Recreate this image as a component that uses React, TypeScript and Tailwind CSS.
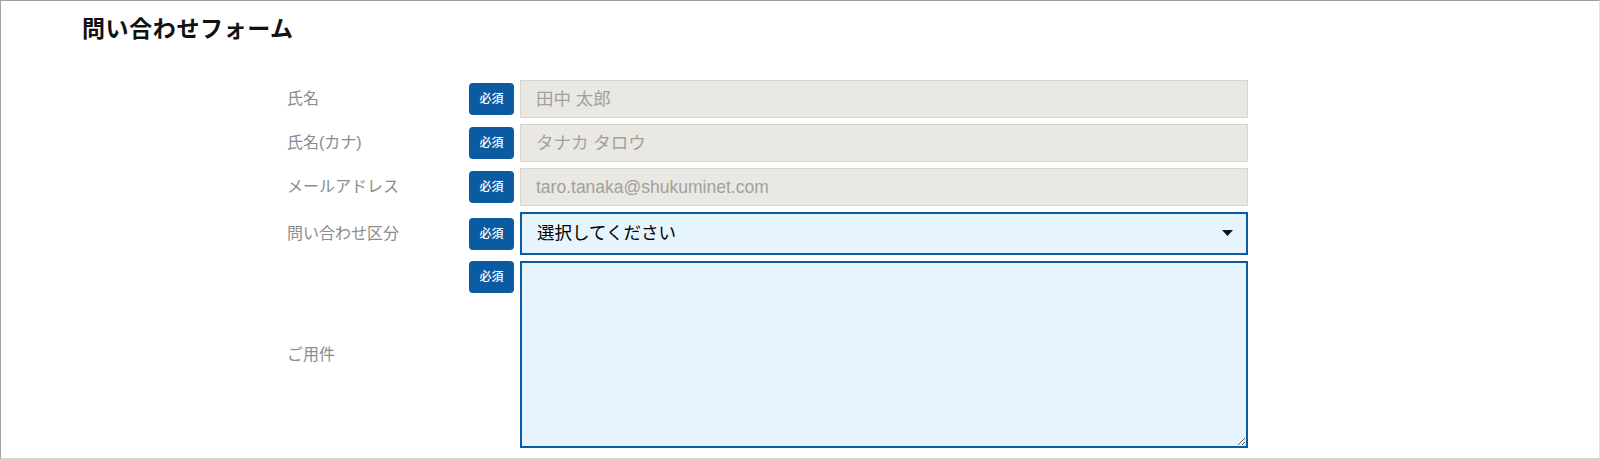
import React from "react";

const font = {
  fontFamily: '"Liberation Sans", "Noto Sans CJK JP", sans-serif',
};

const Badge: React.FC<{ className?: string }> = ({ className = "" }) => (
  <span
    className={`flex h-[32px] w-[45px] items-center justify-center rounded-[4px] bg-[#0b5ba3] text-[12px] font-medium text-white ${className}`}
  >
    必須
  </span>
);

const fields = [
  { label: "氏名", placeholder: "田中 太郎" },
  { label: "氏名(カナ)", placeholder: "タナカ タロウ" },
  { label: "メールアドレス", placeholder: "taro.tanaka@shukuminet.com" },
];

export default function App() {
  return (
    <div
      style={font}
      className="h-[459px] w-full overflow-hidden border-t border-l border-t-[#9e9e9e] border-l-[#a3a3a3] border-r border-b border-r-[#e2e2e2] border-b-[#d4d4d4] bg-white"
    >
      <h1 className="pl-[81px] pt-[13px] text-[23px] font-bold leading-[30px] tracking-[0.6px] text-[#111]">
        問い合わせフォーム
      </h1>

      <form className="mt-[36px] flex flex-col gap-[6px] pl-[286px]">
        {fields.map((f) => (
          <div key={f.label} className="flex items-center">
            <label className="w-[182px] text-[16px] text-[#8c8c8c]">
              {f.label}
            </label>
            <Badge />
            <input
              readOnly
              placeholder={f.placeholder}
              className="ml-[6px] h-[38px] w-[728px] border border-[#d6d5d0] bg-[#e9e8e2] px-[15px] text-[17.5px] outline-none placeholder:text-[#a2a19d]"
            />
          </div>
        ))}

        <div className="flex items-center">
          <label className="w-[182px] text-[16px] text-[#8c8c8c]">
            問い合わせ区分
          </label>
          <Badge className="mt-[1px]" />
          <div className="relative ml-[6px]">
            <select className="h-[43px] w-[728px] appearance-none border-2 border-[#0b5ba3] bg-[#e6f4fd] px-[15px] text-[17.5px] text-black outline-none">
              <option>選択してください</option>
            </select>
            <svg
              className="pointer-events-none absolute right-[15px] top-[18px]"
              width="11"
              height="6"
              viewBox="0 0 11 6"
            >
              <path d="M0 0h11L5.5 6z" fill="#111" />
            </svg>
          </div>
        </div>

        <div className="flex items-center">
          <label className="w-[182px] text-[16px] text-[#8c8c8c]">
            ご用件
          </label>
          <Badge className="self-start" />
          <textarea className="ml-[6px] h-[187px] w-[728px] border-2 border-[#0b5ba3] bg-[#e6f4fd] p-2 outline-none" />
        </div>
      </form>
    </div>
  );
}
